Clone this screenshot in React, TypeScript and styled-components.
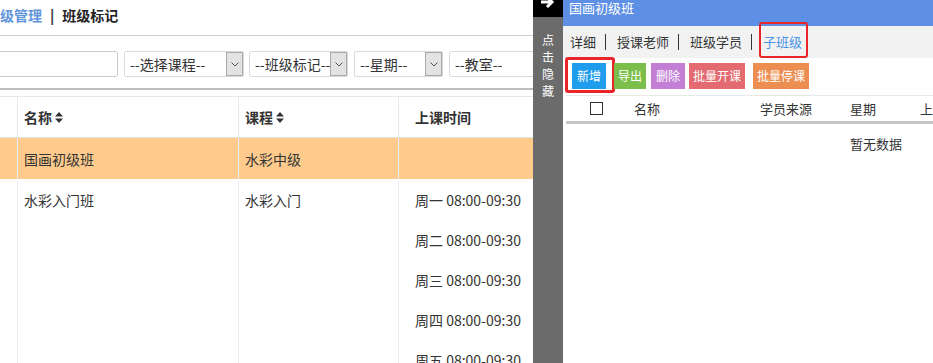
import styled, { createGlobalStyle } from "styled-components";

const GlobalStyle = createGlobalStyle`
  html, body {
    margin: 0;
    padding: 0;
    background: #fff;
  }
  body {
    font-family: "Microsoft YaHei", "Noto Sans CJK SC", sans-serif;
    color: #333;
  }
`;

const Screen = styled.div`
  display: flex;
  width: 933px;
  height: 363px;
  overflow: hidden;
`;

/* ---------- left page (scrolled sideways) ---------- */

const MainArea = styled.div`
  width: 533px;
  flex: none;
  overflow: hidden;
`;

const MainInner = styled.div`
  margin-left: -110px;
  width: 760px;
`;

const Breadcrumb = styled.div`
  height: 36px;
  box-sizing: border-box;
  padding: 5px 0 0 96px;
  border-bottom: 1px solid #cfcfcf;
  font-size: 14px;
  font-weight: bold;
  line-height: 20px;
  display: flex;
`;

const CrumbLink = styled.span`
  color: #5f95db;
`;

const CrumbSep = styled.span`
  margin: 0 8px;
  color: #444;
  font-weight: 900;
`;

const CrumbCurrent = styled.span`
  color: #222;
`;

const FilterRow = styled.div`
  display: flex;
  margin-top: 15px;
  padding-left: 10px;
  height: 26px;
`;

const SearchInput = styled.div`
  width: 218px;
  height: 26px;
  box-sizing: border-box;
  border: 1px solid #c9c9c9;
  border-radius: 3px;
  margin-right: 6px;
`;

const SelectBox = styled.div<{ $w: number; $gap: number }>`
  width: ${(p) => p.$w}px;
  margin-right: ${(p) => p.$gap}px;
  height: 26px;
  box-sizing: border-box;
  border: 1px solid #dadada;
  border-radius: 2px;
  display: flex;
  align-items: center;
  justify-content: space-between;
  font-size: 14px;
  color: #333;
  padding-left: 5px;
  flex: none;
  overflow: hidden;
`;

const SelectLabel = styled.span`
  white-space: nowrap;
  overflow: hidden;
  flex: 1;
  min-width: 0;
`;

const SelectArrow = styled.div`
  width: 17px;
  height: 24px;
  flex: none;
  box-sizing: border-box;
  background: #e3e3e3;
  border: 1px solid #a9a9a9;
  display: flex;
  align-items: center;
  justify-content: center;
`;

const ThickRule = styled.div`
  margin-top: 11px;
  height: 2px;
  background: #bdbdbd;
`;

const DataTable = styled.table`
  margin-top: 6px;
  border-collapse: collapse;
  table-layout: fixed;
  width: 760px;
  font-size: 14px;
  color: #333;
  border-top: 1px solid #e3e8ee;
`;

const HeadCell = styled.th<{ $pad?: number }>`
  height: 41px;
  padding: 0 0 0 ${(p) => p.$pad ?? 6}px;
  text-align: left;
  font-weight: bold;
  border-left: 1px solid #e6eaef;
  border-bottom: 1px solid #dde3ea;
  box-sizing: border-box;
`;

const BodyRow = styled.tr<{ $active?: boolean }>`
  background: ${(p) => (p.$active ? "#fecb8d" : "#fff")};
`;

const BodyCell = styled.td<{ $pad?: number }>`
  height: 40px;
  padding: 1px 0 0 ${(p) => p.$pad ?? 6}px;
  vertical-align: top;
  line-height: 40px;
  border-left: 1px solid #eceff3;
  box-sizing: border-box;
`;

const SortLabel = styled.span`
  display: inline-flex;
  align-items: center;
  gap: 3px;
`;

/* ---------- hide strip ---------- */

const Strip = styled.div`
  width: 30px;
  flex: none;
  background: #6b6b6b;
  display: flex;
  flex-direction: column;
  align-items: center;
`;

const StripCap = styled.div`
  width: 100%;
  height: 17px;
  background: #000;
  overflow: hidden;
  display: flex;
  justify-content: center;
  align-items: flex-end;
`;

const StripText = styled.div`
  margin-top: 14px;
  width: 12px;
  font-size: 12px;
  line-height: 17px;
  color: #fff;
`;

/* ---------- right detail panel ---------- */

const Panel = styled.div`
  flex: 1;
  display: flex;
  flex-direction: column;
  background: #fff;
  font-size: 13px;
`;

const PanelHeader = styled.div`
  height: 26px;
  flex: none;
  background: #5d90e4;
  color: #fff;
  padding-left: 6px;
  line-height: 15px;
`;

const TabBar = styled.div`
  height: 32px;
  flex: none;
  background: #f2f2f2;
  display: flex;
  align-items: center;
  padding-left: 7px;
  color: #333;
`;

const Tab = styled.span<{ $active?: boolean }>`
  position: relative;
  color: ${(p) => (p.$active ? "#4a94e8" : "#333")};
  line-height: 32px;

  ${(p) =>
    p.$active &&
    `
    &::after {
      content: "";
      position: absolute;
      top: -4px;
      bottom: 0;
      left: -4px;
      right: -6px;
      border: 2px solid #e8262a;
      border-radius: 3px;
    }
  `}
`;

const TabDivider = styled.span`
  width: 1px;
  height: 16px;
  background: #333;
  margin: 0 11px 0 9px;
`;

const ButtonRow = styled.div`
  display: flex;
  padding: 5px 0 0 9px;
`;

const ActionButton = styled.span<{
  $bg: string;
  $marked?: boolean;
  $gap: number;
  $pad: number;
}>`
  position: relative;
  background: ${(p) => p.$bg};
  color: #fff;
  font-size: 12px;
  height: 26px;
  line-height: 26px;
  padding: 0 ${(p) => p.$pad}px;
  margin-right: ${(p) => p.$gap}px;

  ${(p) =>
    p.$marked &&
    `
    &::after {
      content: "";
      position: absolute;
      top: -6px;
      bottom: -4px;
      left: -7px;
      right: -9px;
      border: 3px solid #e8262a;
      border-radius: 3px;
    }
  `}
`;

const SubTable = styled.div`
  margin: 6px 0 0 3px;
  border-top: 1px solid #e8e8e8;
`;

const SubHead = styled.div`
  display: grid;
  grid-template-columns: 61px 126px 90px 70px 1fr;
  height: 25px;
  align-items: center;
  border-bottom: 3px solid #c6c6c6;
  color: #333;
`;

const SubHeadCell = styled.div<{ $center?: boolean }>`
  padding-left: ${(p) => (p.$center ? 0 : 7)}px;
  display: flex;
  justify-content: ${(p) => (p.$center ? "center" : "flex-start")};
  white-space: nowrap;
`;

const CheckBox = styled.span`
  width: 13px;
  height: 13px;
  box-sizing: border-box;
  border: 1px solid #333;
  background: #fff;
`;

const EmptyRow = styled.div`
  height: 40px;
  line-height: 40px;
  padding-left: 284px;
  color: #333;
`;

const SortIcon = () => (
  <svg width="8" height="11" viewBox="0 0 8 11">
    <path d="M4 0 L8 4.5 H0 Z M0 6.5 H8 L4 11 Z" fill="#333" />
  </svg>
);

const Chevron = () => (
  <svg width="8" height="5" viewBox="0 0 8 5">
    <path d="M0.5 0.5 L4 4 L7.5 0.5" fill="none" stroke="#555" strokeWidth="1" />
  </svg>
);

const StripArrow = () => (
  <svg width="16" height="16" viewBox="0 0 16 16" style={{ marginBottom: 7 }}>
    <path d="M1 8 H11 M7 3 L12 8 L7 13" fill="none" stroke="#fff" strokeWidth="3" />
  </svg>
);

const times = ["周一", "周二", "周三", "周四", "周五"];

const filters = [
  { label: "--选择课程--", w: 120, gap: 5 },
  { label: "--班级标记--", w: 99, gap: 6 },
  { label: "--星期--", w: 89, gap: 6 },
];

const buttons = [
  { label: "新增", bg: "#1f9ceb", gap: 8, pad: 5, marked: true },
  { label: "导出", bg: "#7bbf4a", gap: 5, pad: 4 },
  { label: "删除", bg: "#c27fd5", gap: 4, pad: 5 },
  { label: "批量开课", bg: "#e26a70", gap: 8, pad: 4 },
  { label: "批量停课", bg: "#ec8e52", gap: 0, pad: 4 },
];

const App = () => {
  return (
    <Screen>
      <GlobalStyle />
      <MainArea>
        <MainInner>
          <Breadcrumb>
            <CrumbLink>班级管理</CrumbLink>
            <CrumbSep>|</CrumbSep>
            <CrumbCurrent>班级标记</CrumbCurrent>
          </Breadcrumb>

          <FilterRow>
            <SearchInput />
            {filters.map((f) => (
              <SelectBox key={f.label} $w={f.w} $gap={f.gap}>
                <SelectLabel>{f.label}</SelectLabel>
                <SelectArrow>
                  <Chevron />
                </SelectArrow>
              </SelectBox>
            ))}
            <SelectBox $w={140} $gap={0}>
              <SelectLabel>--教室--</SelectLabel>
            </SelectBox>
          </FilterRow>

          <ThickRule />

          <DataTable>
            <colgroup>
              <col style={{ width: 127 }} />
              <col style={{ width: 221 }} />
              <col style={{ width: 160 }} />
              <col />
            </colgroup>
            <thead>
              <tr>
                <HeadCell />
                <HeadCell>
                  <SortLabel>
                    名称 <SortIcon />
                  </SortLabel>
                </HeadCell>
                <HeadCell>
                  <SortLabel>
                    课程 <SortIcon />
                  </SortLabel>
                </HeadCell>
                <HeadCell $pad={16}>上课时间</HeadCell>
              </tr>
            </thead>
            <tbody>
              <BodyRow $active>
                <BodyCell />
                <BodyCell>国画初级班</BodyCell>
                <BodyCell>水彩中级</BodyCell>
                <BodyCell $pad={16} />
              </BodyRow>
              <BodyRow>
                <BodyCell />
                <BodyCell>水彩入门班</BodyCell>
                <BodyCell>水彩入门</BodyCell>
                <BodyCell $pad={16}>
                  {times.map((t) => (
                    <div key={t}>{t} 08:00-09:30</div>
                  ))}
                </BodyCell>
              </BodyRow>
            </tbody>
          </DataTable>
        </MainInner>
      </MainArea>

      <Strip>
        <StripCap>
          <StripArrow />
        </StripCap>
        <StripText>点击隐藏</StripText>
      </Strip>

      <Panel>
        <PanelHeader>国画初级班</PanelHeader>
        <TabBar>
          <Tab>详细</Tab>
          <TabDivider />
          <Tab>授课老师</Tab>
          <TabDivider />
          <Tab>班级学员</Tab>
          <TabDivider />
          <Tab $active>子班级</Tab>
        </TabBar>

        <ButtonRow>
          {buttons.map((b) => (
            <ActionButton
              key={b.label}
              $bg={b.bg}
              $gap={b.gap}
              $pad={b.pad}
              $marked={b.marked}
            >
              {b.label}
            </ActionButton>
          ))}
        </ButtonRow>

        <SubTable>
          <SubHead>
            <SubHeadCell $center>
              <CheckBox />
            </SubHeadCell>
            <SubHeadCell>名称</SubHeadCell>
            <SubHeadCell>学员来源</SubHeadCell>
            <SubHeadCell>星期</SubHeadCell>
            <SubHeadCell>上课时间</SubHeadCell>
          </SubHead>
          <EmptyRow>暂无数据</EmptyRow>
        </SubTable>
      </Panel>
    </Screen>
  );
};

export default App;
